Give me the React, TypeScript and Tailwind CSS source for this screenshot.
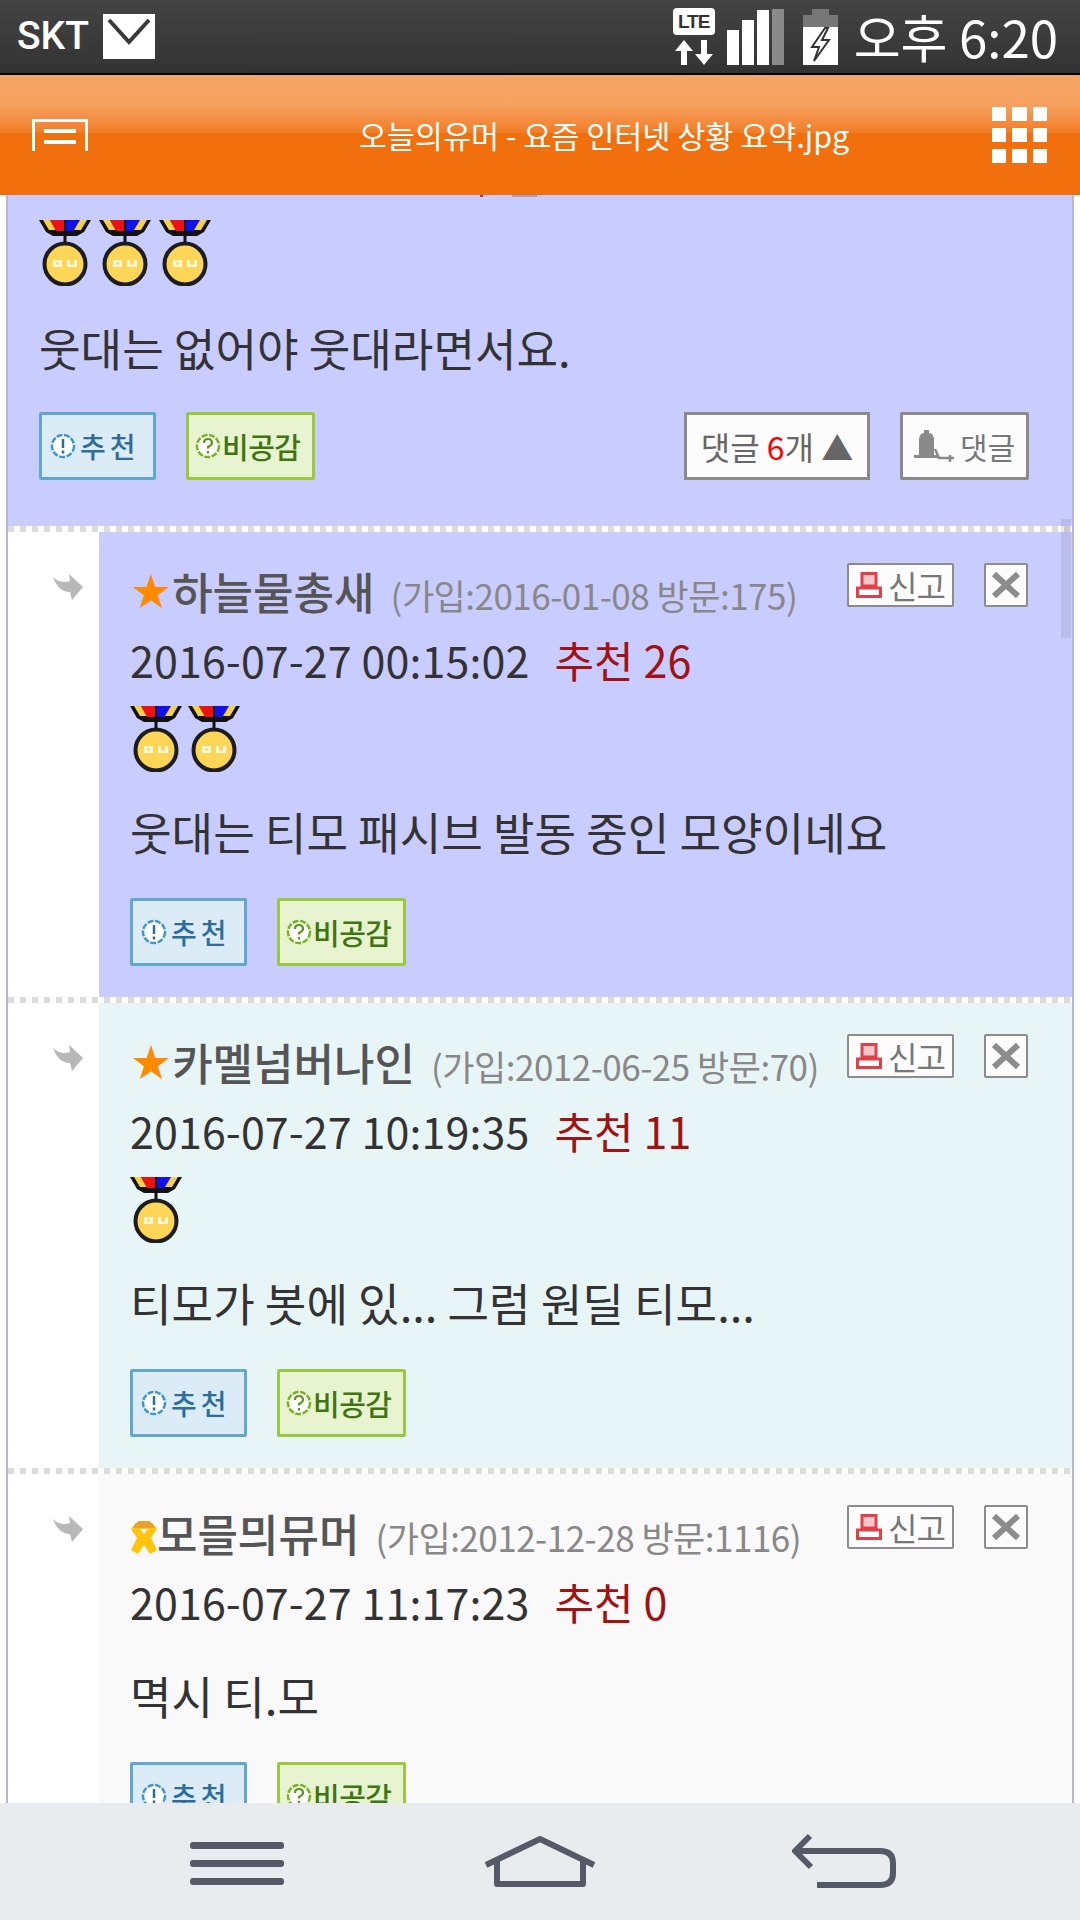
const FONT = "font-['Noto_Sans_CJK_KR','Noto_Sans',sans-serif]"

// ─── Icons ────────────────────────────────────────────────
function Mail() {
  return (
    <svg width="52" height="45" viewBox="0 0 52 45" className="ml-[14px]">
      <rect width="52" height="45" fill="#fff" />
      <path d="M6 6 L26 28 L46 6" fill="none" stroke="#3a3a3a" strokeWidth="4" />
    </svg>
  )
}

function Lte() {
  return (
    <div className="flex w-[42px] flex-col items-center">
      <div className="flex h-[27px] w-[42px] items-center justify-center rounded-[4px] bg-white font-['Liberation_Sans',sans-serif] text-[19px] leading-none font-bold tracking-[-1px] text-[#333]">
        LTE
      </div>
      <svg width="40" height="25" viewBox="0 0 40 25" className="mt-[5px]">
        <path d="M10 0 L19 11 H13 V25 H7 V11 H1 Z M30 25 L21 14 H27 V0 H33 V14 H39 Z" fill="#fff" />
      </svg>
    </div>
  )
}

function Signal() {
  return (
    <svg width="57" height="56" viewBox="0 0 57 56" className="ml-[12px]">
      <rect x="0" y="21" width="12" height="35" fill="#fff" />
      <rect x="15" y="11" width="12" height="45" fill="#fff" />
      <rect x="30" y="1" width="12" height="55" fill="#fff" />
      <rect x="45" y="0" width="12" height="56" fill="#8a8a8a" />
    </svg>
  )
}

function Battery() {
  return (
    <svg width="35" height="56" viewBox="0 0 35 56" className="ml-[19px]">
      <rect x="9" y="0" width="17" height="7" fill="#777" />
      <rect x="0" y="6" width="35" height="12" fill="#777" />
      <rect x="0" y="18" width="35" height="38" fill="#fff" />
      <path d="M22 19 L9 38 H16 L11 52 L26 31 H19 L25 19 Z" fill="#fff" stroke="#333" strokeWidth="2" />
    </svg>
  )
}

function HeaderMenu() {
  return (
    <svg width="56" height="32" viewBox="0 0 56 32">
      <path d="M1.5 32 V1.5 H54.5 V32" fill="none" stroke="#fff" strokeWidth="3" />
      <rect x="12" y="10" width="32" height="4" fill="#fff" />
      <rect x="12" y="21" width="32" height="4" fill="#fff" />
    </svg>
  )
}

function Grid() {
  return (
    <div className="grid w-[55px] grid-cols-3 gap-x-[6px] gap-y-[7px]">
      {Array.from({ length: 9 }).map((_, i) => (
        <div key={i} className="h-[14px] bg-white" />
      ))}
    </div>
  )
}

function Medal() {
  return (
    <svg width="52" height="66" viewBox="0 0 52 66" className="shrink-0">
      <path d="M0 0 L7 12 L14 16 H38 L45 12 L52 0 Z" fill="#111" />
      <path d="M4 0 L10 10 H17 L11 0 Z" fill="#f3d24a" />
      <path d="M11 0 L17 11 H25 V0 Z" fill="#ee1111" />
      <path d="M27 0 V11 H35 L41 0 Z" fill="#1111ee" />
      <path d="M41 0 L35 10 H42 L48 0 Z" fill="#f3d24a" />
      <rect x="24.5" y="14" width="3" height="10" fill="#111" />
      <circle cx="26" cy="44" r="20.500" fill="#fdd557" stroke="#1c1c1c" strokeWidth="4" />
      <path d="M14 40 h9 v7 h-9 Z M17 42.500 v2 h3 v-2 Z M28 40 h3 v4.500 h4 V40 h3 v7 h-10 Z" fill="#fff7d8" fillRule="evenodd" />
    </svg>
  )
}

function Arrow() {
  return (
    <svg width="32" height="30" viewBox="0 0 32 30">
      <path d="M1 5 C6 10 12 11 18 9 L17 2 L31 15 L20 28 L18 20 C10 20 4 14 1 5 Z" fill="#b8b8b8" />
    </svg>
  )
}

function Ribbon() {
  return (
    <svg width="28" height="34" viewBox="0 0 28 34" className="mt-[10px] mr-[-1px] shrink-0">
      <path d="M5 3 L9 0 H19 L23 3 L27 8 L21 17 L27 29 L20 33 L14 24 L8 33 L1 29 L7 17 L1 8 Z" fill="#fec50c" />
      <path d="M5 3 L9 0 H19 L23 3 L25 7 H3 Z" fill="#e8a32c" />
      <path d="M10 8 H18 L14 13 Z" fill="#f9f9f9" />
    </svg>
  )
}

function Siren() {
  return (
    <svg width="26" height="26" viewBox="0 0 26 26" className="shrink-0">
      <path d="M6 1.500 H20 V14 H6 Z" fill="#f6c6c8" stroke="#e0404a" strokeWidth="3" />
      <path d="M1.500 16 H24.500 V24.500 H1.500 Z" fill="#fff" stroke="#e0404a" strokeWidth="3" />
    </svg>
  )
}

function Bell() {
  return (
    <svg width="42" height="34" viewBox="0 0 42 34" className="shrink-0">
      <path d="M5 28 V12 Q5 4 10 4 V1 H15 V4 Q20 4 20 12 V28 Z" fill="#8a8a8a" />
      <rect x="0" y="26" width="24" height="3" fill="#8a8a8a" />
      <path d="M21 20 L25 29 H40 M36 26 V33" fill="none" stroke="#8a8a8a" strokeWidth="2.500" />
    </svg>
  )
}

function CloseX() {
  return (
    <div className="flex h-[44px] w-[44px] items-center justify-center rounded-[2px] border-2 border-[#8c8c8c] bg-[#fcfcfc]">
      <svg width="30" height="28" viewBox="0 0 30 28">
        <path d="M3 3 L27 25 M27 3 L3 25" stroke="#8c8c8c" strokeWidth="6" />
      </svg>
    </div>
  )
}

// ─── Buttons ──────────────────────────────────────────────
function Recommend() {
  return (
    <div className="flex h-[68px] w-[117px] items-center rounded-[2px] border-[3px] border-[#62a7d2] bg-[#dcecf7] pl-[8px] text-[28px] leading-none font-medium tracking-[4px] text-[#2c6d9c]">
      <svg width="26" height="26" viewBox="0 0 26 26" className="mr-[4px] shrink-0">
        <circle cx="13" cy="13" r="11" fill="#fff" stroke="#3d97cf" strokeWidth="2.500" strokeDasharray="6 1.500" />
        <path d="M13 6 V15 M13 17.500 V20.500" stroke="#2c6d9c" strokeWidth="2.500" />
      </svg>
      추천
    </div>
  )
}

function Dislike() {
  return (
    <div className="flex h-[68px] w-[129px] items-center rounded-[2px] border-[3px] border-[#9ac83e] bg-[#e8f3d0] pl-[6px] text-[29px] leading-none font-medium tracking-[-0.5px] text-[#3f7510]">
      <svg width="26" height="26" viewBox="0 0 26 26" className="mr-[1px] shrink-0">
        <circle cx="13" cy="13" r="11" fill="#fff" stroke="#76b41e" strokeWidth="2.500" strokeDasharray="6 1.500" />
        <path d="M9 10 Q9 6 13 6 Q17 6 17 10 Q17 12 13 14 V15.500 M13 18 V20.500" fill="none" stroke="#5c9416" strokeWidth="2.200" />
      </svg>
      비공감
    </div>
  )
}

function Report() {
  return (
    <div className="flex h-[44px] w-[107px] items-center rounded-[2px] border-2 border-[#8c8c8c] bg-[#fcfcfc] pl-[7px] text-[32px] leading-none text-[#777]">
      <Siren />
      <span className="ml-[6px] tracking-[-1px]">신고</span>
    </div>
  )
}

function Votes() {
  return (
    <div className="flex gap-[30px]">
      <Recommend />
      <Dislike />
    </div>
  )
}

// ─── Comment rows ─────────────────────────────────────────
type Comment = {
  badge: 'star' | 'ribbon'
  name: string
  meta: string
  date: string
  votes: number
  medals: number
  text: string
  bg: string
}

const COMMENTS: Comment[] = [
  { badge: 'star', name: '하늘물총새', meta: '(가입:2016-01-08 방문:175)', date: '2016-07-27 00:15:02', votes: 26, medals: 2, text: '웃대는 티모 패시브 발동 중인 모양이네요', bg: 'bg-[#c9ccff]' },
  { badge: 'star', name: '카멜넘버나인', meta: '(가입:2012-06-25 방문:70)', date: '2016-07-27 10:19:35', votes: 11, medals: 1, text: '티모가 봇에 있... 그럼 원딜 티모...', bg: 'bg-[#e8f5f7]' },
  { badge: 'ribbon', name: '모믈믜뮤머', meta: '(가입:2012-12-28 방문:1116)', date: '2016-07-27 11:17:23', votes: 0, medals: 0, text: '멱시 티.모', bg: 'bg-[#f9f9f9]' },
]

function Dots() {
  return <div className="h-[6px] shrink-0 bg-[repeating-linear-gradient(90deg,#dcdcdc_0,#dcdcdc_6px,#ffffff_6px,#ffffff_12px)]" />
}

function Row({ c }: { c: Comment }) {
  return (
    <div className="flex shrink-0">
      <div className="w-[91px] shrink-0 pt-[40px] pl-[44px]">
        <Arrow />
      </div>
      <div className={`flex-1 pt-[31px] pr-[44px] pb-[31px] pl-[31px] ${c.bg}`}>
        <div className="flex items-start justify-between">
          <div className="flex h-[56px] items-center">
            {c.badge === 'star' ? (
              <span className="font-['DejaVu_Sans',sans-serif] text-[47px] leading-none text-[#ff8a00]">★</span>
            ) : (
              <Ribbon />
            )}
            <span className="text-[44px] leading-none font-medium text-[#555]">{c.name}</span>
            <span className="ml-[16px] pt-[6px] text-[35px] leading-none tracking-[-0.5px] text-[#888]">{c.meta}</span>
          </div>
          <div className="flex gap-[30px]">
            <Report />
            <CloseX />
          </div>
        </div>
        <div className="mt-[15px] flex h-[50px] items-center text-[43px] leading-none tracking-[0.1px] text-[#333]">
          <span>{c.date}</span>
          <span className="ml-[25px] text-[#a31212]">추천 {c.votes}</span>
        </div>
        {c.medals > 0 && (
          <div className="mt-[22px] flex h-[66px] gap-[6px]">
            {Array.from({ length: c.medals }).map((_, i) => (
              <Medal key={i} />
            ))}
          </div>
        )}
        <p className={`${c.medals > 0 ? 'mt-[35px]' : 'mt-[45px]'} text-[45.2px] leading-[50px] text-[#333]`}>{c.text}</p>
        <div className="mt-[41px]">
          <Votes />
        </div>
      </div>
    </div>
  )
}

// ─── Page ─────────────────────────────────────────────────
export default function App() {
  return (
    <div className={`flex h-[1920px] w-[1080px] flex-col overflow-hidden bg-white ${FONT}`}>
      <div className="flex h-[75px] shrink-0 items-center justify-between border-b-2 border-black bg-gradient-to-b from-[#444] to-[#333] pr-[22px] pl-[17px]">
        <div className="flex items-center">
          <span className="font-['Roboto',sans-serif] text-[39px] leading-none font-medium text-white">SKT</span>
          <Mail />
        </div>
        <div className="flex items-center">
          <Lte />
          <Signal />
          <Battery />
          <span className="ml-[16px] text-[51px] leading-none text-white">오후 6:20</span>
        </div>
      </div>

      <div className="relative flex h-[120px] shrink-0 items-center justify-between bg-[#f26f0e] pr-[33px] pl-[32px]">
        <div className="absolute inset-x-0 top-0 h-[58px] bg-gradient-to-b from-[#f6a566] via-[#f6a160] to-[#f27c20]" />
        <div className="relative">
          <HeaderMenu />
        </div>
        <span className="relative ml-[128px] text-[30.5px] leading-none text-white">오늘의유머 - 요즘 인터넷 상황 요약.jpg</span>
        <div className="relative">
          <Grid />
        </div>
      </div>

      <div className="relative min-h-0 flex-1 overflow-hidden">
        {/* bottom edge of the text scrolled away under the header */}
        <div className="absolute top-0 left-[480px] h-[2px] w-[3px] bg-[#c03030]" />
        <div className="absolute top-0 left-[512px] h-[2px] w-[25px] bg-[#a0a0b8]" />
        <div className="mx-[6px] flex h-full flex-col border-x-2 border-[#b8b8d4]">
          <div className="h-[331px] shrink-0 bg-[#c9ccff] pt-[25px] pr-[43px] pl-[31px]">
            <div className="flex h-[65px] gap-[8px]">
              <Medal />
              <Medal />
              <Medal />
            </div>
            <p className="mt-[38px] text-[45.2px] leading-[50px] text-[#333]">웃대는 없어야 웃대라면서요.</p>
            <div className="mt-[39px] flex items-start justify-between">
              <Votes />
              <div className="flex gap-[30px]">
                <div className="flex h-[68px] w-[186px] items-center justify-center border-[3px] border-[#8a8a8a] bg-[#fcfcfc] text-[32px] leading-none text-[#666]">
                  댓글&nbsp;<span className="text-[#ff0000]">6</span>개&nbsp;▲
                </div>
                <div className="flex h-[68px] w-[129px] items-center justify-center rounded-[2px] border-[3px] border-[#8a8a8a] bg-[#fcfcfc] text-[30px] leading-none text-[#777]">
                  <Bell />
                  <span className="ml-[4px]">댓글</span>
                </div>
              </div>
            </div>
          </div>
          {COMMENTS.map(c => (
            <div key={c.name} className="flex shrink-0 flex-col">
              <Dots />
              <Row c={c} />
            </div>
          ))}
        </div>
        {/* page scrollbar */}
        <div className="absolute top-[324px] right-[9px] h-[119px] w-[10px] bg-[#8080a0]/20" />
      </div>

      <div className="relative flex h-[117px] shrink-0 items-center bg-[#e9ecef]">
        <svg width="1080" height="117" viewBox="0 0 1080 117">
          <g fill="#555a66">
            <rect x="190" y="39" width="94" height="7" rx="3" />
            <rect x="190" y="57" width="94" height="7" rx="3" />
            <rect x="190" y="75" width="94" height="7" rx="3" />
          </g>
          <path d="M486 62 L540 36 L594 62 M497 57 V81 H583 V57" fill="none" stroke="#555a66" strokeWidth="6" strokeLinejoin="round" />
          <path d="M810 33 L795 48 L811 64 M798 48 H880 Q893 48 893 60 V70 Q893 82 880 82 H817" fill="none" stroke="#555a66" strokeWidth="6" strokeLinejoin="round" />
        </svg>
      </div>
    </div>
  )
}
